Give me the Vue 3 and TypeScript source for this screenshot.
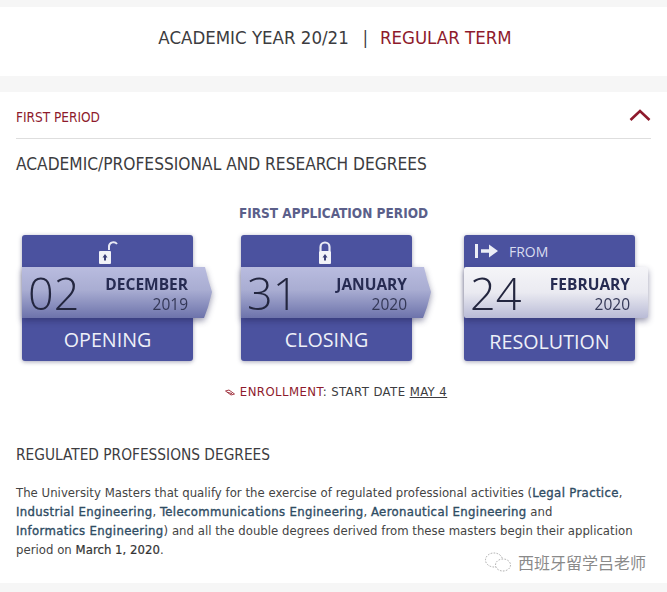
<script setup lang="ts">
interface DateCard {
  day: string;
  month: string;
  year: string;
  label: string;
  kind: 'open' | 'closed' | 'result';
}

const cards: DateCard[] = [
  { day: '02', month: 'DECEMBER', year: '2019', label: 'OPENING', kind: 'open' },
  { day: '31', month: 'JANUARY', year: '2020', label: 'CLOSING', kind: 'closed' },
  { day: '24', month: 'FEBRUARY', year: '2020', label: 'RESOLUTION', kind: 'result' },
];
</script>

<template>
  <div class="page">
    <header class="year-band">
      <span>ACADEMIC YEAR 20/21</span>
      <span class="sep">|</span>
      <span class="term">REGULAR TERM</span>
    </header>

    <main class="panel">
      <div class="period-row">
        <span class="period">FIRST PERIOD</span>
        <svg class="chevron" width="22" height="12" viewBox="0 0 22 12">
          <path d="M1.5 11 L11 2 L20.5 11" fill="none" stroke="#8e1a2c" stroke-width="2.6" />
        </svg>
      </div>

      <h2 class="degrees">ACADEMIC/PROFESSIONAL AND RESEARCH DEGREES</h2>
      <h3 class="application">FIRST APPLICATION PERIOD</h3>

      <div class="cards">
        <section v-for="card in cards" :key="card.label" class="card" :class="card.kind">
          <div class="card-top">
            <svg v-if="card.kind === 'open'" class="lock" width="20" height="26" viewBox="0 0 20 26">
              <path d="M11 10 V6 A4.5 4.5 0 0 1 19 4" fill="none" stroke="#e8e9f4" stroke-width="2" />
              <rect x="1" y="11" width="12" height="13" rx="1" fill="#f1f2f8" />
              <path d="M7 14 L9.5 17.5 H8 V20.5 H6 V17.5 H4.5 Z" fill="#3a3f78" />
            </svg>
            <svg v-else-if="card.kind === 'closed'" class="lock" width="16" height="26" viewBox="0 0 16 26">
              <path d="M3.5 11 V7 A4.5 4.5 0 0 1 12.5 7 V11" fill="none" stroke="#e8e9f4" stroke-width="2.2" />
              <rect x="2" y="11" width="12" height="13" rx="1" fill="#f1f2f8" />
              <path d="M8 14 L10.5 17.5 H9 V20.5 H7 V17.5 H5.5 Z" fill="#3a3f78" />
            </svg>
            <div v-else class="from">
              <svg width="24" height="16" viewBox="0 0 24 16">
                <rect x="0" y="1" width="3" height="14" fill="#eceef6" />
                <path d="M6 6.2 H14 V1.5 L23 8 L14 14.5 V9.8 H6 Z" fill="#eceef6" />
              </svg>
              <span>FROM</span>
            </div>
          </div>

          <div class="ribbon-shadow">
            <div class="ribbon">
              <span class="day">{{ card.day }}</span>
              <div class="when">
                <strong>{{ card.month }}</strong>
                <span>{{ card.year }}</span>
              </div>
            </div>
          </div>

          <div class="card-label">{{ card.label }}</div>
        </section>
      </div>

      <p class="enrollment">
        <svg width="10" height="7" viewBox="0 0 10 7">
          <path d="M0.5 2 L4 1 L9.5 5 L6 6 Z M2 3.2 L7 4.6" fill="none" stroke="#a33a46" stroke-width="1" />
        </svg>
        <span class="enroll-red">ENROLLMENT</span>: START DATE <u>MAY 4</u>
      </p>

      <h2 class="regulated">REGULATED PROFESSIONS DEGREES</h2>

      <p class="body-text">
        The University Masters that qualify for the exercise of regulated professional activities
        (<b>Legal Practice</b>,<br />
        <b>Industrial Engineering</b>, <b>Telecommunications Engineering</b>,
        <b>Aeronautical Engineering</b> and<br />
        <b>Informatics Engineering</b>) and all the double degrees derived from these masters begin
        their application<br />
        period on <span class="date">March 1, 2020</span>.
      </p>

      <div class="watermark">
        <svg width="28" height="22" viewBox="0 0 28 22">
          <g fill="none" stroke="#a9a9a9" stroke-width="1" stroke-dasharray="1.6 1.4">
            <ellipse cx="10" cy="9" rx="8.5" ry="7" />
            <ellipse cx="19" cy="14" rx="7.5" ry="6" fill="#fff" />
          </g>
        </svg>
        <span>西班牙留学吕老师</span>
      </div>
    </main>
  </div>
</template>

<style>
html,
body {
  margin: 0;
  background: #f6f6f6;
}
</style>

<style scoped>
.page {
  width: 667px;
  height: 592px;
  overflow: hidden;
  padding-top: 7px;
  box-sizing: border-box;
  background: #f6f6f6;
  font-family: "DejaVu Sans", "Noto Sans CJK SC", sans-serif;
  color: #3c3c40;
}

.year-band {
  height: 69px;
  background: #fff;
  display: flex;
  align-items: center;
  justify-content: center;
  gap: 10px;
  padding: 0 0 8px 3px;
  box-sizing: border-box;
  font-size: 18.5px;
  font-stretch: condensed;
}

.sep {
  font-size: 17px;
  margin: 0 2px 0 4px;
}

.term {
  color: #8e1a2c;
}

.panel {
  position: relative;
  height: 491px;
  margin-top: 16px;
  background: #fff;
  padding: 0 16px;
  box-sizing: border-box;
}

.period-row {
  height: 47px;
  border-bottom: 1px solid #dedede;
  display: flex;
  align-items: center;
  justify-content: space-between;
  padding-top: 3px;
  box-sizing: border-box;
}

.period {
  font-size: 13.5px;
  font-stretch: condensed;
  color: #8e1a2c;
}

.chevron {
  margin-top: -3px;
}

.degrees {
  margin: 15px 0 0;
  font-size: 17.2px;
  line-height: 21px;
  font-weight: 400;
  font-stretch: condensed;
}

.application {
  margin: 29px 0 0;
  text-align: center;
  font-size: 13.5px;
  line-height: 18px;
  font-weight: 700;
  font-stretch: condensed;
  color: #5b5f8a;
}

.cards {
  display: flex;
  margin: 13px 0 0 6px;
}

.card {
  flex: none;
  width: 171px;
  height: 126px;
  margin-right: 48px;
  border-radius: 3px;
  background: #4b529f;
  box-shadow: 0 1px 4px rgba(60, 60, 100, 0.45);
  display: flex;
  flex-direction: column;
  font-family: "Open Sans", sans-serif;
}

.card.closed {
  margin-right: 52px;
}

.card-top {
  height: 32px;
  display: flex;
  align-items: center;
  justify-content: center;
}

.lock {
  margin-top: 4px;
}

.closed .lock {
  margin-left: -4px;
}

.from {
  width: 100%;
  display: flex;
  align-items: center;
  gap: 10px;
  padding-left: 11px;
  font-size: 14px;
  color: #d9dcef;
}

.ribbon-shadow {
  width: 190px;
  height: 51px;
  filter: drop-shadow(0 3px 3px rgba(30, 32, 80, 0.45));
}

.ribbon {
  width: 190px;
  height: 51px;
  display: flex;
  align-items: center;
  justify-content: space-between;
  padding: 0 24px 0 6px;
  box-sizing: border-box;
  color: #262b52;
  background: linear-gradient(#b9bcdf 0%, #a9add2 45%, #6d73ab 100%);
  clip-path: polygon(0 0, 183px 0, 186px 12px, 190px 25px, 186px 40px, 182px 51px, 0 51px);
}

.result .ribbon-shadow,
.result .ribbon {
  width: 184px;
}

.result .ribbon {
  padding-right: 18px;
  background: linear-gradient(#f5f5f8 0%, #eaeaf1 50%, #b9bbd6 100%);
  clip-path: none;
  border-radius: 2px;
}

.day {
  font-size: 45px;
  line-height: 51px;
  font-weight: 300;
  color: #23263f;
}

.when {
  display: flex;
  flex-direction: column;
  align-items: flex-end;
  padding-top: 2px;
  font-size: 15.5px;
  line-height: 20px;
}

.when strong {
  font-weight: 700;
}

.when span {
  color: #343857;
}

.card-label {
  flex: 1;
  display: flex;
  align-items: center;
  justify-content: center;
  font-size: 19.7px;
  color: #eef0f8;
}

.result .card-label {
  padding-top: 3px;
}

.enrollment {
  margin: 23px 0 0;
  padding-left: 5px;
  text-align: center;
  font-size: 13px;
  line-height: 16px;
  font-stretch: condensed;
  letter-spacing: 0.44px;
}

.enrollment svg {
  margin-right: 5px;
}

.enroll-red {
  color: #8e1a2c;
}

.regulated {
  margin: 46px 0 0;
  font-size: 15.3px;
  line-height: 18px;
  font-weight: 400;
  font-stretch: condensed;
}

.body-text {
  margin: 19px 0 0;
  white-space: nowrap;
  font-size: 13px;
  line-height: 19px;
  font-stretch: condensed;
  letter-spacing: 0.03px;
  color: #444;
}

.body-text b {
  font-weight: 400;
  letter-spacing: 0.35px;
  color: #2f4c63;
  -webkit-text-stroke: 0.35px #2f4c63;
}

.date {
  color: #333;
  -webkit-text-stroke: 0.2px #333;
}

.watermark {
  position: absolute;
  left: 484px;
  top: 458px;
  display: flex;
  align-items: center;
  gap: 6px;
  font-size: 16px;
  color: #8a8a8a;
}
</style>
